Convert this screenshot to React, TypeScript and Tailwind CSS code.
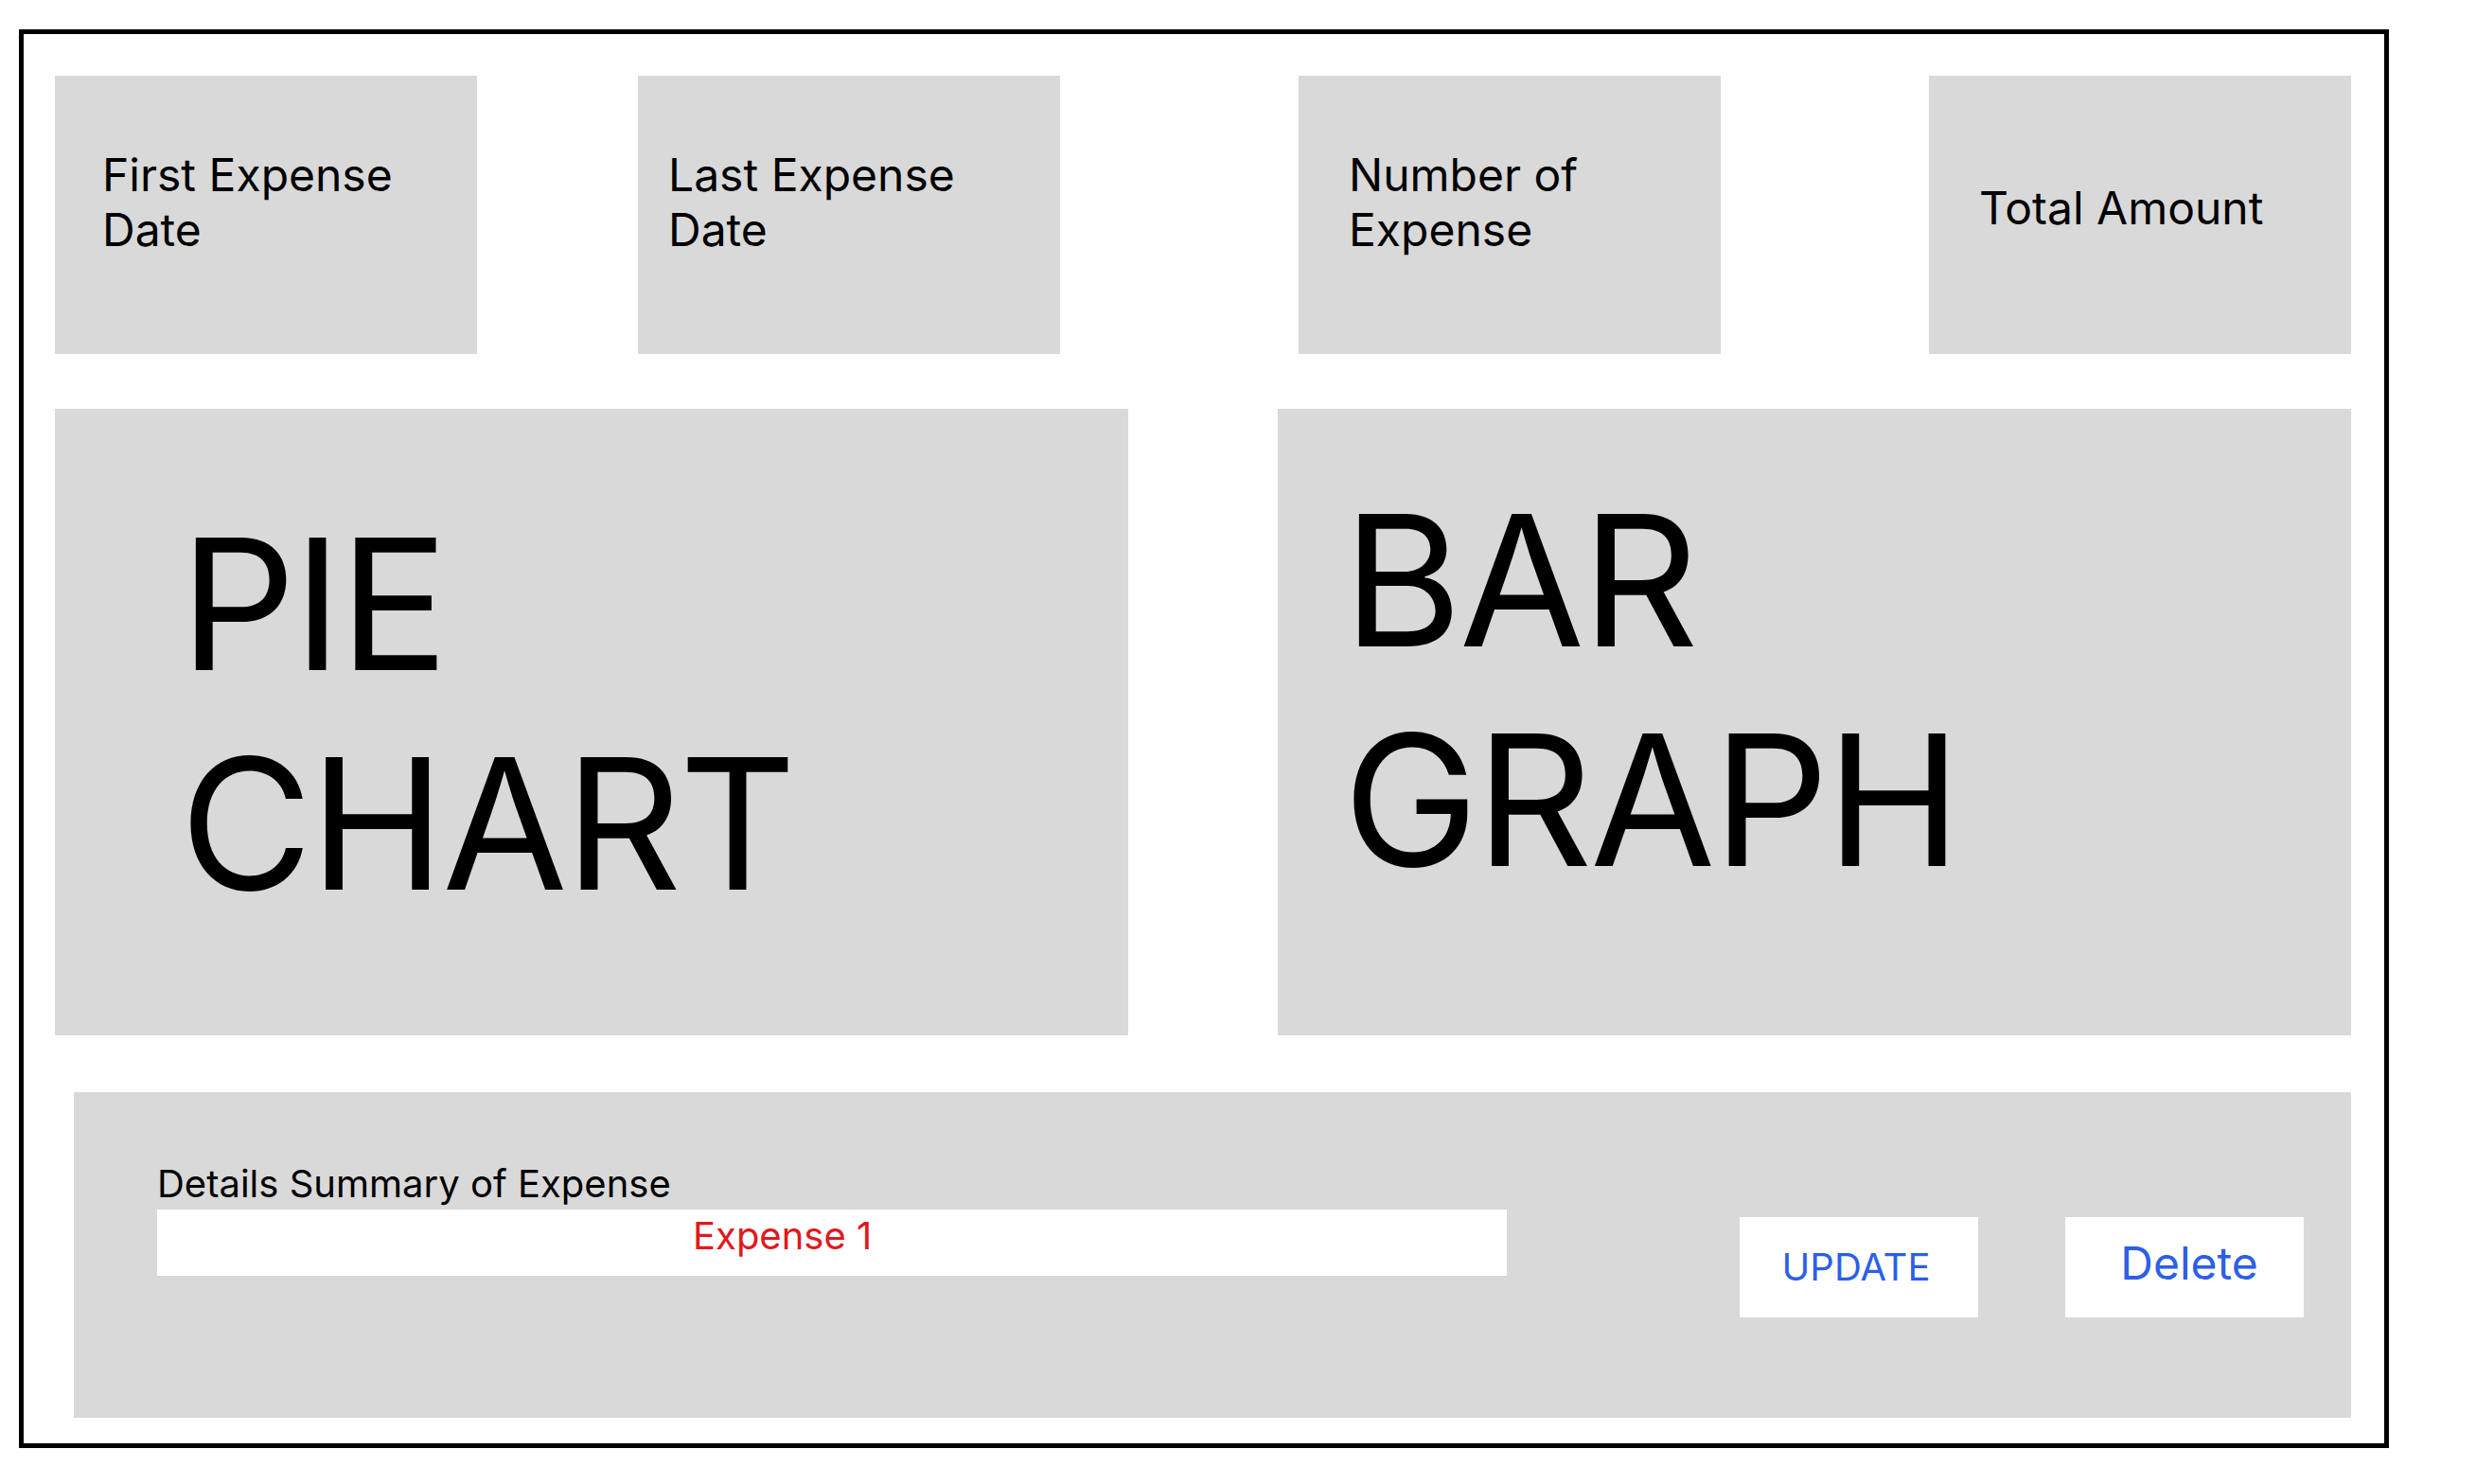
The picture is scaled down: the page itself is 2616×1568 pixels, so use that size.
const font = { fontFamily: 'Inter, "Noto Sans", sans-serif' }

// ── Stat card ────────────────────────────────────────────────────────────────

function StatCard({ label, className }: { label: string; className: string }) {
  return (
    <div className={`w-[446px] h-full shrink-0 bg-[#d9d9d9] text-[48px] leading-[1.21] text-black ${className}`}>
      {label}
    </div>
  )
}

// ── App ──────────────────────────────────────────────────────────────────────

export default function App() {
  return (
    <div className="w-[2616px] h-[1568px] bg-white pt-[31px] pl-[20px]" style={font}>
      <div className="w-[2504px] h-[1499px] border-[5px] border-black pt-[44px] pl-[33px] flex flex-col">
        {/* Summary cards */}
        <div className="flex h-[294px]">
          <StatCard className="pl-[50px] pt-[76px]" label="First Expense Date" />
          <StatCard className="ml-[170px] pl-[32px] pt-[76px]" label="Last Expense Date" />
          <StatCard className="ml-[252px] pl-[53px] pt-[76px] pr-[100px]" label="Number of Expense" />
          <StatCard className="ml-[220px] pl-[53px] pt-[111px]" label="Total Amount" />
        </div>

        {/* Charts */}
        <div className="flex mt-[58px] h-[662px]">
          <div className="w-[1134px] h-full bg-[#d9d9d9] pl-[132px] pt-[90px] text-[192px] leading-[1.21] tracking-[-0.015em] text-black">
            PIE
            <br />
            CHART
          </div>
          <div className="ml-[158px] w-[1134px] h-full bg-[#d9d9d9] pl-[69px] pt-[65px] text-[192px] leading-[1.21] tracking-[-0.015em] text-black">
            BAR
            <br />
            GRAPH
          </div>
        </div>

        {/* Details */}
        <div className="mt-[60px] ml-[20px] w-[2406px] h-[344px] bg-[#d9d9d9] flex items-start pl-[88px]">
          <div className="pt-[73px] flex flex-col">
            <div className="text-[40px] leading-[1.21] text-black">Details Summary of Expense</div>
            <div className="mt-[3px] w-[1426px] h-[70px] bg-white pl-[566px] pt-[4px] text-[40px] leading-[1.21] text-[#e0191e]">
              Expense 1
            </div>
          </div>
          <div className="mt-[132px] ml-[246px] flex">
            <button className="w-[252px] h-[106px] bg-white flex items-center justify-center pr-[6px] text-[40px] leading-[1.21] text-[#2c5fe8]">
              UPDATE
            </button>
            <button className="ml-[92px] w-[252px] h-[106px] bg-white flex items-center justify-center pl-[10px] pb-[8px] text-[48px] leading-[1.21] text-[#2c5fe8]">
              Delete
            </button>
          </div>
        </div>
      </div>
    </div>
  )
}
